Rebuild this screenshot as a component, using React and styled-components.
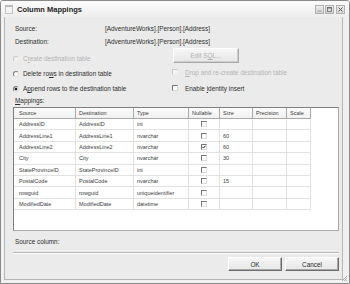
import React from "react";
import styled, { createGlobalStyle } from "styled-components";

const Global = createGlobalStyle`
  html, body { margin: 0; padding: 0; background: #ffffff; }
  body { font-family: "Liberation Sans", Arial, sans-serif; }
`;

const Window = styled.div`
  box-sizing: border-box;
  width: 350px;
  height: 284px;
  border: 1px solid #8a8a8a;
  border-radius: 3px 3px 0 0;
  background: #f1f1f1;
  display: flex;
  flex-direction: column;
  position: relative;
  font-family: "Liberation Sans", Arial, sans-serif;
  font-size: 6.4px;
  color: #2e2e2e;
  overflow: hidden;
`;

const TitleBar = styled.div`
  height: 16px;
  flex: none;
  display: flex;
  align-items: center;
  padding: 0 4px;
  gap: 4px;
  background: linear-gradient(#fbfbfb, #eeeeee);
`;

const AppIcon = styled.span`
  box-sizing: border-box;
  width: 8px;
  height: 9px;
  border: 1px solid #c4c4c4;
  border-top: 2px solid #b9b9b9;
  background: #f4f4f4;
`;

const Title = styled.span`
  flex: 1;
  font-size: 7.5px;
  font-weight: bold;
  color: #1e1e1e;
`;

const Controls = styled.div`
  display: flex;
  gap: 1px;
`;

const CtrlButton = styled.span`
  box-sizing: border-box;
  width: 9px;
  height: 9px;
  border: 1px solid #b0b0b0;
  background: linear-gradient(#ececec, #d6d6d6);
  display: flex;
  align-items: center;
  justify-content: center;
  margin-left: ${(p) => (p.$gap ? "1px" : "0")};
`;

const Body = styled.div`
  flex: 1;
  margin: 0 6px 3px 3px;
  border: 1px solid #b5b5b5;
  border-top: none;
  background: #ebebeb;
  display: flex;
  flex-direction: column;
  padding: 0 3px 0 8px;
`;

const InfoGrid = styled.div`
  display: grid;
  grid-template-columns: 92px 1fr;
  grid-auto-rows: 13px;
  align-items: center;
  padding-top: 5px;
`;

const Label = styled.span`
  padding-left: 2px;
  line-height: ${(p) => p.$lh || "normal"};
  height: ${(p) => p.$h || "auto"};
  margin-top: ${(p) => p.$mt || "0"};
  margin-bottom: ${(p) => p.$mb || "0"};
  color: ${(p) => (p.$disabled ? "#b4b4b4" : "#2e2e2e")};
`;

const Key = styled.u`
  text-decoration: underline;
`;

const Options = styled.div`
  display: flex;
  height: 48px;
`;

const RadioColumn = styled.div`
  width: 159px;
  padding-top: 3px;
  display: flex;
  flex-direction: column;
`;

const OptionRow = styled.label`
  display: flex;
  align-items: center;
  height: ${(p) => p.$h || "15px"};
  margin-top: ${(p) => p.$mt || "0"};
  gap: ${(p) => p.$gap || "4px"};
  color: ${(p) => (p.$disabled ? "#b4b4b4" : "#2e2e2e")};
`;

const Radio = styled.span`
  box-sizing: border-box;
  width: 6px;
  height: 6px;
  border-radius: 50%;
  border: 1px solid;
  border-color: ${(p) =>
    p.$disabled ? "#c8c8c8 #ececec #ececec #c8c8c8" : "#7a7a7a #dedede #dedede #7a7a7a"};
  background: ${(p) =>
    p.$checked ? "radial-gradient(circle, #1a1a1a 0 1.2px, #ffffff 1.7px)" : p.$disabled ? "#f3f3f3" : "#ffffff"};
`;

const RightColumn = styled.div`
  display: flex;
  flex-direction: column;
`;

const PushButton = styled.button`
  box-sizing: border-box;
  width: ${(p) => p.$w || "54px"};
  height: ${(p) => p.$h || "14px"};
  margin-left: ${(p) => p.$ml || "0"};
  padding: 0;
  font-family: inherit;
  font-size: 6.4px;
  color: ${(p) => (p.$disabled ? "#b0b0b0" : "#2a2a2a")};
  background: linear-gradient(#f6f6f6, #e6e6e6);
  border: 1px solid;
  border-color: ${(p) => (p.$disabled ? "#ffffff #a6a6a6 #a6a6a6 #ffffff" : "#ffffff #6c6c6c #6c6c6c #ffffff")};
  box-shadow: ${(p) => (p.$disabled ? "inset -1px -1px #d0d0d0" : "inset -1px -1px #a9a9a9")};
  cursor: default;
`;

const Check = styled.span`
  box-sizing: border-box;
  flex: none;
  width: 6px;
  height: 6px;
  border: 1px solid;
  border-color: ${(p) =>
    p.$disabled ? "#c8c8c8 #ececec #ececec #c8c8c8" : "#767676 #dcdcdc #dcdcdc #767676"};
  background: ${(p) => (p.$disabled ? "#f3f3f3" : "#ffffff")};
  display: flex;
  align-items: center;
  justify-content: center;
`;

const Table = styled.div`
  box-sizing: border-box;
  height: 124px;
  border: 1px solid;
  border-color: #7f7f7f #a9a9a9 #a9a9a9 #7f7f7f;
  background: #ffffff;
  display: grid;
  grid-template-columns: 62px 58px 55px 31px 33px 34px 24px;
  grid-template-rows: 11px;
  grid-auto-rows: 11.4px;
  align-content: start;
  font-size: 5.5px;
  color: #3c3c3c;
`;

const HeadCell = styled.div`
  box-sizing: border-box;
  display: flex;
  align-items: center;
  padding-left: ${(p) => (p.$first ? "5px" : "3px")};
  border-right: 1px solid #a9a9a9;
  border-bottom: 1px solid #a9a9a9;
  background: linear-gradient(#fbfbfb, #f1f1f1);
`;

const Cell = styled.div`
  box-sizing: border-box;
  display: flex;
  align-items: center;
  justify-content: ${(p) => (p.$center ? "center" : "flex-start")};
  padding-left: ${(p) => (p.$center ? "0" : p.$first ? "5px" : "3px")};
  border-right: 1px solid #e2e2e2;
  border-bottom: 1px solid #e2e2e2;
  white-space: nowrap;
  overflow: hidden;
`;

const Separator = styled.div`
  margin-top: 5px;
  border-top: 1px solid #b3b3b3;
  border-bottom: 1px solid #ffffff;
`;

const ButtonRow = styled.div`
  display: flex;
  justify-content: flex-end;
  gap: 3px;
  margin-top: 3px;
`;

const Grip = styled.svg`
  position: absolute;
  right: 1px;
  bottom: 1px;
`;

const rows = [
  ["AddressID", "AddressID", "int", false, ""],
  ["AddressLine1", "AddressLine1", "nvarchar", false, "60"],
  ["AddressLine2", "AddressLine2", "nvarchar", true, "60"],
  ["City", "City", "nvarchar", false, "30"],
  ["StateProvinceID", "StateProvinceID", "int", false, ""],
  ["PostalCode", "PostalCode", "nvarchar", false, "15"],
  ["rowguid", "rowguid", "uniqueidentifier", false, ""],
  ["ModifiedDate", "ModifiedDate", "datetime", false, ""],
];

const headers = ["Source", "Destination", "Type", "Nullable", "Size", "Precision", "Scale"];

function Tick() {
  return (
    <svg width="4" height="4" viewBox="0 0 4 4">
      <path d="M0.3 1.8 L1.5 3.1 L3.7 0.6" stroke="#111" strokeWidth="0.9" fill="none" />
    </svg>
  );
}

export default function App() {
  return (
    <>
      <Global />
      <Window>
        <TitleBar>
          <AppIcon />
          <Title>Column Mappings</Title>
          <Controls>
            <CtrlButton>
              <svg width="5" height="5" viewBox="0 0 5 5">
                <rect x="0.5" y="3.5" width="4" height="1" fill="#9a9a9a" />
              </svg>
            </CtrlButton>
            <CtrlButton>
              <svg width="5" height="5" viewBox="0 0 5 5">
                <rect x="0.5" y="0.5" width="4" height="4" fill="none" stroke="#666" strokeWidth="0.8" />
                <rect x="0.5" y="0.5" width="4" height="1" fill="#666" />
              </svg>
            </CtrlButton>
            <CtrlButton $gap>
              <svg width="5" height="5" viewBox="0 0 5 5">
                <path d="M0.5 0.5 L4.5 4.5 M4.5 0.5 L0.5 4.5" stroke="#5a5a5a" strokeWidth="1" />
              </svg>
            </CtrlButton>
          </Controls>
        </TitleBar>
        <Body>
          <InfoGrid>
            <Label>Source:</Label>
            <span>[AdventureWorks].[Person].[Address]</span>
            <Label>Destination:</Label>
            <span>[AdventureWorks].[Person].[Address]</span>
          </InfoGrid>
          <Options>
            <RadioColumn>
              <OptionRow $disabled>
                <Radio $disabled />
                <span>
                  C<Key>r</Key>eate destination table
                </span>
              </OptionRow>
              <OptionRow>
                <Radio />
                <span>
                  Delete ro<Key>w</Key>s in destination table
                </span>
              </OptionRow>
              <OptionRow>
                <Radio $checked />
                <span>
                  A<Key>p</Key>pend rows to the destination table
                </span>
              </OptionRow>
            </RadioColumn>
            <RightColumn>
              <PushButton $disabled $w="66px" $h="15px" $ml="1px">
                Edit S<Key>Q</Key>L...
              </PushButton>
              <OptionRow $h="16px" $gap="7px" $mt="1px" $disabled>
                <Check $disabled />
                <span>
                  <Key>D</Key>rop and re-create destination table
                </span>
              </OptionRow>
              <OptionRow $h="16px" $gap="7px">
                <Check />
                <span>
                  Enable <Key>i</Key>dentity insert
                </span>
              </OptionRow>
            </RightColumn>
          </Options>
          <Label $h="9px" $lh="9px" $mb="2px">
            <Key>M</Key>appings:
          </Label>
          <Table>
            {headers.map((h, i) => (
              <HeadCell key={h} $first={i === 0}>
                {h}
              </HeadCell>
            ))}
            {rows.map(([src, dst, type, nullable, size]) => (
              <React.Fragment key={src}>
                <Cell $first>{src}</Cell>
                <Cell>{dst}</Cell>
                <Cell>{type}</Cell>
                <Cell $center>
                  <Check>{nullable && <Tick />}</Check>
                </Cell>
                <Cell>{size}</Cell>
                <Cell />
                <Cell />
              </React.Fragment>
            ))}
          </Table>
          <Label $h="10px" $lh="10px" $mt="6px">
            Source column:
          </Label>
          <Separator />
          <ButtonRow>
            <PushButton>OK</PushButton>
            <PushButton>Cancel</PushButton>
          </ButtonRow>
        </Body>
        <Grip width="7" height="7" viewBox="0 0 7 7">
          <path d="M6 1 L1 6 M6 3 L3 6 M6 5 L5 6" stroke="#9a9a9a" strokeWidth="0.8" />
        </Grip>
      </Window>
    </>
  );
}
